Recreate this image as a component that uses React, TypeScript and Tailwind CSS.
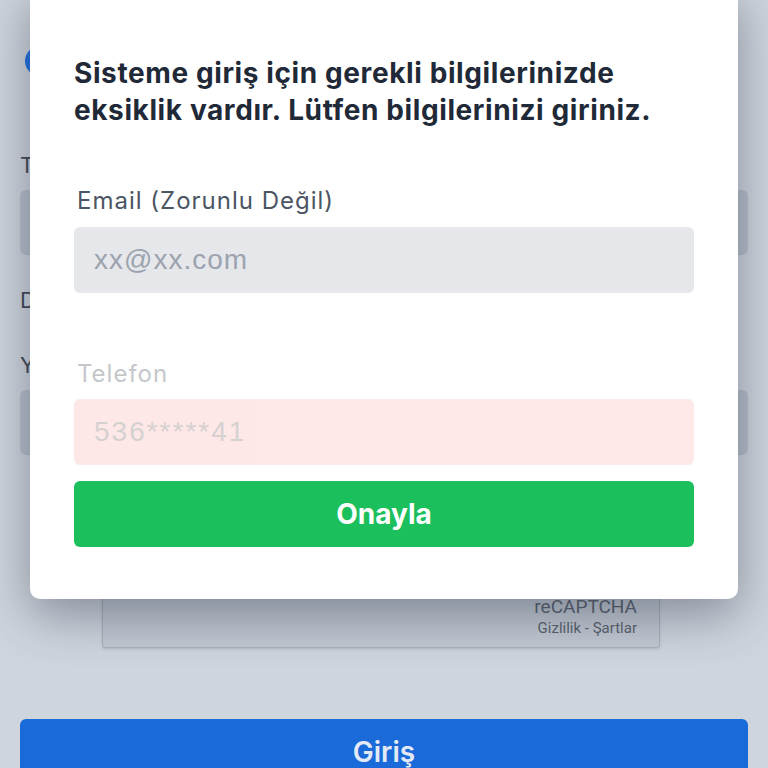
import React from 'react';

function BackgroundForm() {
  return (
    <div className="flex flex-col px-5 pt-[46px] font-['Inter',sans-serif] text-[#3f4753]">
      {/* Logo */}
      <div className="ml-[5px] w-[30px] h-[30px] rounded-full bg-[#1d6fe0]" />

      <div className="mt-[75px] text-[22px] leading-[28px]">TC Kimlik No</div>
      <div className="mt-[11px] h-[65px] rounded-md bg-[#b7bfca]" />

      <div className="mt-[31px] text-[22px] leading-[28px]">Doğum Tarihi</div>

      <div className="mt-[37px] text-[22px] leading-[28px]">Yetkili Adı</div>
      <div className="mt-[11px] h-[65px] rounded-md bg-[#b7bfca]" />

      {/* reCAPTCHA */}
      <div className="mt-[106px] mx-[82px] w-[558px] h-[87px] rounded-[3px] border border-[#aab2bd] bg-[#c3c9d2] shadow-sm flex flex-col items-end justify-end pr-[22px] pb-[10px] font-['Roboto',sans-serif]">
        <div className="text-[19px] leading-[22px] text-[#5a626d]">reCAPTCHA</div>
        <div className="mt-[1px] text-[15px] leading-[18px] text-[#5a626d]">Gizlilik - Şartlar</div>
      </div>

      <button className="mt-[71px] h-[66px] shrink-0 rounded-md bg-[#1a6ad9] text-[#e3eaf6] text-[28px] leading-[66px] font-semibold">
        Giriş
      </button>
    </div>
  );
}

function MissingInfoModal() {
  return (
    <div className="absolute left-[30px] right-[30px] top-[-16px] rounded-[10px] bg-white shadow-[0_16px_50px_rgba(40,50,70,0.45)] px-[44px] pt-[71px] pb-[52px] font-['Inter',sans-serif]">
      <h2 className="text-[28px] leading-[37px] tracking-[0.6px] font-bold text-[#1f2937]">
        Sisteme giriş için gerekli bilgilerinizde eksiklik vardır. Lütfen bilgilerinizi giriniz.
      </h2>

      <label className="block mt-[58px] ml-[3px] text-[24px] leading-[28px] tracking-[1px] text-[#4b5563]">
        Email (Zorunlu Değil)
      </label>
      <input
        className="mt-[12px] w-full h-[66px] rounded-md bg-[#e5e7eb] px-5 text-[28px] tracking-[1px] font-['Liberation_Sans',sans-serif] text-[#374151] placeholder:text-[#9ca3af] outline-none"
        placeholder="xx@xx.com"
      />

      <div className="opacity-40">
        <label className="block mt-[67px] ml-[3px] text-[24px] leading-[28px] tracking-[1px] text-[#6b7280]">
          Telefon
        </label>
        <input
          disabled
          className="mt-[11px] w-full h-[66px] rounded-md bg-[#fcc5c5] px-5 text-[28px] tracking-[2px] font-['Liberation_Sans',sans-serif] placeholder:text-[#9a8e8e] outline-none"
          placeholder="536*****41"
        />
      </div>

      <button className="mt-[16px] w-full h-[66px] rounded-md bg-[#1bbf5b] text-white text-[28px] font-bold">
        Onayla
      </button>
    </div>
  );
}

export default function App() {
  return (
    <div className="relative w-[768px] h-[768px] overflow-hidden bg-[#cfd5dd]">
      <BackgroundForm />
      <MissingInfoModal />
    </div>
  );
}
